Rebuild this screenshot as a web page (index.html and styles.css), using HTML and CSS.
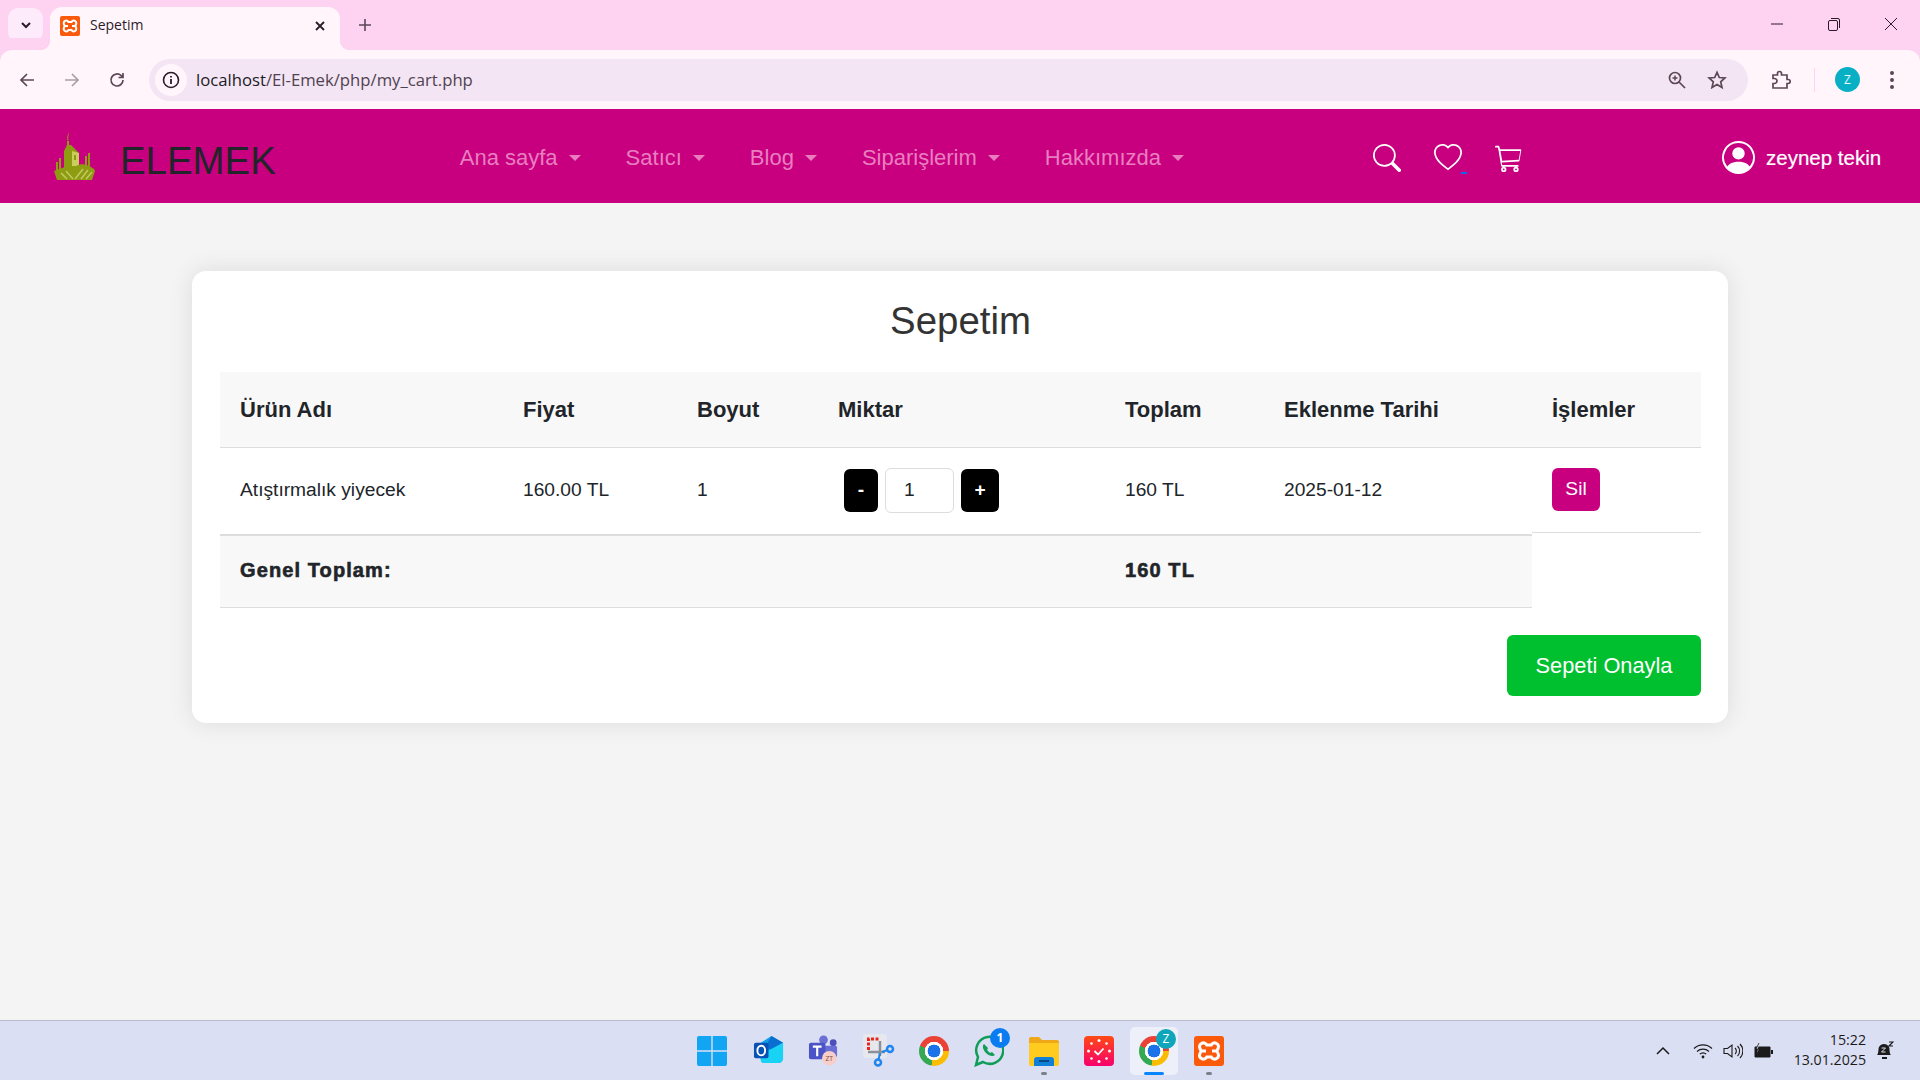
FILE: index.html
```html
<!DOCTYPE html>
<html lang="tr">
<head>
  <meta charset="UTF-8">
  <title>Sepetim</title>
  <link rel="stylesheet" href="styles.css">
</head>
<body>
  <!-- browser frame -->
  <div class="tabstrip">
    <div class="tab-search">
      <svg width="14" height="14" viewBox="0 0 14 14"><path d="M3 5l4 4 4-4" fill="none" stroke="#2b1b28" stroke-width="2"/></svg>
    </div>
    <div class="tab">
      <svg class="favicon" width="20" height="20" viewBox="0 0 20 20"><rect width="20" height="20" rx="2" fill="#fb5a0c"/><path d="M5 5c1.500-1 3 0 3.500 1h3c.5-1 2-2 3.500-1 2 1 1.500 3.500 0 5 1.500 1.500 2 4 0 5-1.500 1-3 0-3.500-1h-3c-.5 1-2 2-3.500 1-2-1-1.500-3.500 0-5-1.500-1.500-2-4 0-5zM5 10h3M12 10h3" fill="none" stroke="#fff" stroke-width="2"/></svg>
      <span class="tab-title">Sepetim</span>
      <svg width="12" height="12" viewBox="0 0 12 12"><path d="M2 2l8 8M10 2l-8 8" stroke="#2b1b28" stroke-width="1.8"/></svg>
    </div>
    <svg class="newtab" width="14" height="14" viewBox="0 0 14 14"><path d="M7 1v12M1 7h12" stroke="#5c4757" stroke-width="1.6"/></svg>
    <div class="win-btns">
      <svg width="14" height="14" viewBox="0 0 14 14"><path d="M1 7h12" stroke="#2b1b28" stroke-width="1"/></svg>
      <svg width="14" height="14" viewBox="0 0 14 14"><rect x="1.5" y="3.5" width="9" height="10" rx="1.5" fill="none" stroke="#2b1b28"/><path d="M4 1.5h7a1.5 1.5 0 0 1 1.5 1.5v8" fill="none" stroke="#2b1b28"/></svg>
      <svg width="14" height="14" viewBox="0 0 14 14"><path d="M1 1l12 12M13 1L1 13" stroke="#2b1b28" stroke-width="1"/></svg>
    </div>
  </div>

  <div class="toolbar">
    <svg class="tool" width="18" height="18" viewBox="0 0 18 18"><path d="M16 9H3M9 3L3 9l6 6" fill="none" stroke="#5c4757" stroke-width="1.7"/></svg>
    <svg class="tool" width="18" height="18" viewBox="0 0 18 18"><path d="M2 9h13M9 3l6 6-6 6" fill="none" stroke="#ab9ea8" stroke-width="1.7"/></svg>
    <svg class="tool" width="18" height="18" viewBox="0 0 18 18"><path d="M15 9a6 6 0 1 1-1.8-4.3L15 6.5M15 2v4.500h-4.500" fill="none" stroke="#5c4757" stroke-width="1.7"/></svg>
    <div class="omnibox">
      <span class="site-info">
        <svg width="18" height="18" viewBox="0 0 18 18"><circle cx="9" cy="9" r="7.5" fill="none" stroke="#2b1b28" stroke-width="1.6"/><path d="M9 8v5M9 5v1.6" stroke="#2b1b28" stroke-width="1.8"/></svg>
      </span>
      <span class="url">localhost<span class="url-path">/El-Emek/php/my_cart.php</span></span>
      <svg class="omni-zoom" width="20" height="20" viewBox="0 0 20 20"><circle cx="8" cy="8" r="5.5" fill="none" stroke="#5c4757" stroke-width="1.7"/><path d="M12 12l6 6" stroke="#5c4757" stroke-width="1.7"/><path d="M8 5.500v5M5.500 8h5" stroke="#5c4757" stroke-width="1.5"/></svg>
      <svg class="omni-star" width="20" height="20" viewBox="0 0 20 20"><path d="M10 2.300l2.300 5.200 5.600.5-4.200 3.800 1.300 5.600-5-3-5 3 1.300-5.600L2.100 8l5.600-.5z" fill="none" stroke="#5c4757" stroke-width="1.7"/></svg>
    </div>
    <svg class="ext-icon" width="20" height="20" viewBox="0 0 20 20"><path d="M2 5h4.500V3.500a2 2 0 0 1 4 0V5H16v4.500h1.200a2 2 0 0 1 0 4H16V18H2v-4.500h1.500a2.500 2.500 0 0 0 0-5H2z" fill="none" stroke="#5c4757" stroke-width="1.7"/></svg>
    <span class="tool-sep"></span>
    <span class="avatar">Z</span>
    <svg class="menu-dots" width="6" height="20" viewBox="0 0 6 20"><circle cx="3" cy="3" r="2" fill="#5c4757"/><circle cx="3" cy="10" r="2" fill="#5c4757"/><circle cx="3" cy="17" r="2" fill="#5c4757"/></svg>
  </div>

  <!-- site -->
  <nav class="navbar">
    <svg class="logo" width="43" height="48" viewBox="0 0 43 48">
      <path d="M15 0c1.500 3-.5 5 .5 8l-1 .5C13.500 5 15.500 3 15 0z" fill="#8d9c10"/>
      <path d="M14 9h2v4h2l8 8v17H11V19l3-6z" fill="#8d9c10"/>
      <path d="M19 19l7 2v13h-7z" fill="#c8cf5a"/>
      <path d="M21 23h2v5h-2z" fill="#8d9c10"/>
      <path d="M3 30h2v9H3zM6 26h2v12H6zM32 24h2v14h-2zM35 21h2v16h-2z" fill="#8d9c10"/>
      <path d="M1 39c5-2 10-4 14-5h8c6-3 11-2 18 3l1 2-3 9H4z" fill="#8d9c10"/>
      <path d="M22 47l8-10M28 47l7-9M33 47l6-7M8 41l6 6M13 39l7 8" stroke="#c2ca62" stroke-width="1.500"/>
    </svg>
    <a class="brand">ELEMEK</a>
    <ul class="nav-links">
      <li class="nav-link">Ana sayfa</li>
      <li class="nav-link">Satıcı</li>
      <li class="nav-link">Blog</li>
      <li class="nav-link">Siparişlerim</li>
      <li class="nav-link">Hakkımızda</li>
    </ul>
    <div class="nav-icons">
      <svg width="28" height="28" viewBox="0 0 16 16" fill="#fff"><path d="M11.742 10.344a6.500 6.500 0 1 0-1.397 1.398h-.001c.03.04.062.078.098.115l3.850 3.850a1 1 0 0 0 1.415-1.414l-3.850-3.850a1.007 1.007 0 0 0-.115-.1zM12 6.500a5.500 5.500 0 1 1-11 0 5.500 5.500 0 0 1 11 0z"/></svg>
      <span class="fav">
        <svg width="28" height="28" viewBox="0 0 16 16" fill="#fff"><path d="m8 2.748-.717-.737C5.600.281 2.514.878 1.400 3.053c-.523 1.023-.641 2.500.314 4.385.920 1.815 2.834 3.989 6.286 6.357 3.452-2.368 5.365-4.542 6.286-6.357.955-1.886.838-3.362.314-4.385C13.486.878 10.400.280 8.717 2.010L8 2.748zM8 15C-7.333 4.868 3.279-3.040 7.824 1.143c.06.055.119.112.176.171a3.120 3.120 0 0 1 .176-.17C12.720-3.042 23.333 4.867 8 15z"/></svg>
      </span>
      <svg width="28" height="28" viewBox="0 0 16 16" fill="#fff"><path d="M0 1.500A.5.500 0 0 1 .5 1H2a.5.500 0 0 1 .485.379L2.890 3H14.500a.5.500 0 0 1 .491.592l-1 6a.5.500 0 0 1-.447.406L3.800 10.500l.3 1.500H13a.5.500 0 0 1 0 1H4a.5.500 0 0 1-.491-.408L2.010 3.607 1.610 2H.5a.5.500 0 0 1-.5-.5zM3.102 4l1 5.500 9.480-.5.850-5H3.102zM5 13a1.500 1.500 0 1 0 0 3 1.500 1.500 0 0 0 0-3zm7 0a1.500 1.500 0 1 0 0 3 1.500 1.500 0 0 0 0-3zm-7 1a.5.500 0 1 1 0 1 .5.500 0 0 1 0-1zm7 0a.5.500 0 1 1 0 1 .5.500 0 0 1 0-1z"/></svg>
    </div>
    <div class="nav-user">
      <svg width="33" height="33" viewBox="0 0 16 16" fill="#fff"><path d="M11 6a3 3 0 1 1-6 0 3 3 0 0 1 6 0z"/><path fill-rule="evenodd" d="M0 8a8 8 0 1 1 16 0A8 8 0 0 1 0 8zm8-7a7 7 0 0 0-5.468 11.370C3.242 11.226 4.805 10 8 10s4.757 1.225 5.468 2.370A7 7 0 0 0 8 1z"/></svg>
      <span>zeynep tekin</span>
    </div>
  </nav>

  <main class="page">
    <section class="cart-card">
      <h2 class="cart-title">Sepetim</h2>
      <table class="cart-table">
        <colgroup>
          <col class="c-name"><col class="c-price"><col class="c-size"><col class="c-qty"><col class="c-total"><col class="c-date"><col class="c-act">
        </colgroup>
        <thead>
          <tr>
            <th>Ürün Adı</th>
            <th>Fiyat</th>
            <th>Boyut</th>
            <th>Miktar</th>
            <th>Toplam</th>
            <th>Eklenme Tarihi</th>
            <th>İşlemler</th>
          </tr>
        </thead>
        <tbody>
          <tr class="item-row">
            <td>Atıştırmalık yiyecek</td>
            <td>160.00 TL</td>
            <td>1</td>
            <td>
              <div class="qty">
                <button class="qty-btn minus">-</button>
                <input class="qty-input" type="text" value="1">
                <button class="qty-btn plus">+</button>
              </div>
            </td>
            <td>160 TL</td>
            <td>2025-01-12</td>
            <td class="act-cell"><div class="act-inner"><button class="btn-del">Sil</button></div></td>
          </tr>
          <tr class="sum-row">
            <td colspan="4">Genel Toplam:</td>
            <td>160 TL</td>
            <td></td>
          </tr>
        </tbody>
      </table>
      <div class="cart-actions">
        <button class="btn-confirm">Sepeti Onayla</button>
      </div>
    </section>
  </main>

  <!-- windows taskbar -->
  <footer class="taskbar">
    <div class="apps">
      <span class="app">
        <svg width="30" height="30" viewBox="0 0 30 30"><path d="M0 2a2 2 0 0 1 2-2h12.300v14.300H0zM15.700 0H28a2 2 0 0 1 2 2v12.300H15.700zM0 15.700h14.300V30H2a2 2 0 0 1-2-2zM15.700 15.700H30V28a2 2 0 0 1-2 2H15.700z" fill="#12a5f4"/></svg>
      </span>
      <span class="app">
        <svg width="31" height="31" viewBox="0 0 32 32"><path d="M8 8l11-7 12 7v16a5 5 0 0 1-5 5H12a4 4 0 0 1-4-4z" fill="#0f9fe8"/><path d="M19 1l12 7-12 8-6-4z" fill="#0a6fd0"/><path d="M8 20l23-12v16a5 5 0 0 1-5 5H12a4 4 0 0 1-4-4z" fill="#19d3f5"/><rect x="1" y="8" width="15" height="16" rx="2" fill="#0652b5"/><ellipse cx="8.500" cy="16" rx="4" ry="5" fill="none" stroke="#fff" stroke-width="2"/></svg>
      </span>
      <span class="app">
        <svg width="31" height="31" viewBox="0 0 32 32"><circle cx="16" cy="5" r="4.500" fill="#6a6fd6"/><circle cx="26" cy="8" r="3.500" fill="#4c50b8"/><rect x="16" y="11" width="14" height="12" rx="2" fill="#6a6fd6"/><rect x="1" y="8" width="17" height="17" rx="2" fill="#4b53c6"/><path d="M5 12h9M9.500 12v10" stroke="#fff" stroke-width="2.200"/><circle cx="22" cy="24" r="7.500" fill="#f5cfc8"/><text class="teams-zt" x="22" y="27">ZT</text></svg>
      </span>
      <span class="app">
        <svg width="32" height="33" viewBox="0 0 32 33"><rect width="24" height="24" rx="3" fill="#e6e8ee"/><path d="M5.500 16V5h11" fill="none" stroke="#e8261e" stroke-width="3" stroke-dasharray="3 1.500"/><path d="M17 7v15M5 18h17" stroke="#8c9098" stroke-width="2.500"/><circle cx="27" cy="15" r="3" fill="none" stroke="#1e86ee" stroke-width="2.500"/><circle cx="15" cy="28.500" r="3" fill="none" stroke="#1e86ee" stroke-width="2.500"/><path d="M17 19l-1.500 6.500M19 18l5.500-2" stroke="#1e86ee" stroke-width="2"/></svg>
      </span>
      <span class="app"><span class="chrome-logo"></span></span>
      <span class="app has-count">
        <svg width="30" height="32" viewBox="0 0 30 32"><path d="M2 30l2-8a13.500 13.500 0 1 1 5 5z" fill="none" stroke="#0f9d58" stroke-width="2.500"/><path d="M10 9c-2 2-1 6 2 9s7 4 9 2l-3-3-2 1-3-3 1-2z" fill="#0f9d58"/></svg>
        <span class="count">1</span>
      </span>
      <span class="app open">
        <svg width="30" height="30" viewBox="0 0 30 30"><path d="M0 3a2 2 0 0 1 2-2h8l3 3h15a2 2 0 0 1 2 2v3H0z" fill="#f0a818"/><path d="M0 7h30v21a2 2 0 0 1-2 2H2a2 2 0 0 1-2-2z" fill="#ffcb1f"/><path d="M5 30v-6a3 3 0 0 1 3-3h14a3 3 0 0 1 3 3v6z" fill="#0f7fd8"/><path d="M10 25h10" stroke="#063a70" stroke-width="1.600"/></svg>
      </span>
      <span class="app">
        <svg width="30" height="30" viewBox="0 0 30 30"><defs><linearGradient id="clk" x1="0" y1="0" x2="0" y2="1"><stop offset="0" stop-color="#ff4a14"/><stop offset="1" stop-color="#f8006c"/></linearGradient></defs><rect width="30" height="30" rx="4" fill="url(#clk)"/><g fill="#fff"><circle cx="15" cy="4.500" r="1.500"/><circle cx="15" cy="25.500" r="1.500"/><circle cx="4.500" cy="15" r="1.500"/><circle cx="25.500" cy="15" r="1.500"/><circle cx="7.500" cy="7.500" r="1.300"/><circle cx="22.500" cy="7.500" r="1.300"/><circle cx="7.500" cy="22.500" r="1.300"/><circle cx="22.500" cy="22.500" r="1.300"/></g><path d="M10.500 15l3.500 3.500 5.500-6" fill="none" stroke="#fff" stroke-width="1.800"/></svg>
      </span>
      <span class="app active">
        <span class="chrome-logo"></span>
        <span class="profile-badge">Z</span>
      </span>
      <span class="app open">
        <svg width="30" height="30" viewBox="0 0 20 20"><rect width="20" height="20" rx="2" fill="#fb5a0c"/><path d="M5 5c1.500-1 3 0 3.500 1h3c.5-1 2-2 3.500-1 2 1 1.500 3.500 0 5 1.500 1.500 2 4 0 5-1.500 1-3 0-3.500-1h-3c-.5 1-2 2-3.500 1-2-1-1.500-3.500 0-5-1.500-1.500-2-4 0-5zM5 10h3M12 10h3" fill="none" stroke="#fff" stroke-width="2"/></svg>
      </span>
    </div>
    <div class="tray">
      <svg width="14" height="14" viewBox="0 0 14 14"><path d="M1 10l6-6 6 6" fill="none" stroke="#1b1b1b" stroke-width="1.500"/></svg>
      <svg class="tray-wifi" width="20" height="16" viewBox="0 0 20 16"><path d="M1 5.500a13 13 0 0 1 18 0M4 8.500a9 9 0 0 1 12 0M6.800 11.200a4.500 4.500 0 0 1 6.400 0" fill="none" stroke="#1b1b1b" stroke-width="1.200"/><circle cx="10" cy="14" r="1.400" fill="#1b1b1b"/></svg>
      <svg class="tray-sound" width="20" height="16" viewBox="0 0 20 16"><path d="M1 5.500h3.500L9 2v12l-4.500-3.500H1z" fill="none" stroke="#1b1b1b" stroke-width="1.100"/><path d="M12 5a4 4 0 0 1 0 6M14.500 3a7 7 0 0 1 0 10M17 1a10 10 0 0 1 0 14" fill="none" stroke="#1b1b1b" stroke-width="1.100"/></svg>
      <svg class="tray-batt" width="20" height="16" viewBox="0 0 20 16"><path d="M2 4h15v10H2z" fill="#1b1b1b" stroke="#1b1b1b"/><rect x="18" y="7" width="2" height="4" fill="#1b1b1b"/><path d="M6 0L3 6h3l-2 5" fill="#dde0f4" stroke="#1b1b1b" stroke-width=".8"/></svg>
      <div class="clock">
        <span>15:22</span>
        <span>13.01.2025</span>
      </div>
      <svg class="tray-bell" width="18" height="20" viewBox="0 0 18 20"><path d="M1 14c2-2 1-6 2-8s3-3 5-3 4 1 5 3 0 6 2 8z" fill="#1b1b1b"/><path d="M6 17h5" stroke="#1b1b1b" stroke-width="2"/><path d="M5.500 7h4l-4 4h4" fill="none" stroke="#dde0f4" stroke-width="1"/><path d="M13 1h4l-4 4h4" fill="none" stroke="#1b1b1b" stroke-width="1.200"/></svg>
    </div>
  </footer>
</body>
</html>
```

FILE: styles.css
```css
* {
  box-sizing: border-box;
}
html, body {
  margin: 0;
  height: 100%;
}
body {
  display: flex;
  flex-direction: column;
  height: 1080px;
  overflow: hidden;
  font-family: "Liberation Sans", Arial, sans-serif;
  color: #212529;
  background: #f4f4f4;
}

/* browser frame */
.tabstrip {
  display: flex;
  align-items: flex-start;
  height: 50px;
  flex: none;
  background: #fdd3f1;
}
.tab-search {
  display: flex;
  align-items: center;
  justify-content: center;
  width: 35px;
  height: 34px;
  margin: 8px 7px 0 8px;
  border-radius: 10px;
  background: #fdeafa;
}
.tab {
  position: relative;
  display: flex;
  align-items: center;
  width: 290px;
  height: 43px;
  margin-top: 7px;
  padding: 0 14px 6px 10px;
  background: #fff5fb;
  border-radius: 12px 12px 0 0;
}
.tab::before,
.tab::after {
  content: "";
  position: absolute;
  bottom: 0;
  width: 10px;
  height: 10px;
}
.tab::before {
  left: -10px;
  background: radial-gradient(circle at 0 0, transparent 10px, #fff5fb 10.5px);
}
.tab::after {
  right: -10px;
  background: radial-gradient(circle at 100% 0, transparent 10px, #fff5fb 10.5px);
}
.favicon {
  flex: none;
}
.tab-title {
  flex: 1;
  margin: 0 0 2px 10px;
  font: 14px "Open Sans", sans-serif;
  color: #2b1b28;
}
.newtab {
  margin: 18px 0 0 18px;
}
.win-btns {
  display: flex;
  align-items: center;
  gap: 43px;
  margin: 17px 22px 0 auto;
}

.toolbar {
  display: flex;
  align-items: center;
  flex: none;
  height: 59px;
  padding: 0 0 0 18px;
  background: #fff5fb;
  border-radius: 12px 12px 0 0;
  box-shadow: 0 -12px 0 #fdd3f1;
}
.tool {
  margin-right: 27px;
}
.tool:nth-child(3) {
  margin-right: 23px;
}
.omnibox {
  display: flex;
  align-items: center;
  width: 1599px;
  height: 42px;
  padding: 0 21px 0 6px;
  border-radius: 21px;
  background: #f3e5f3;
}
.site-info {
  display: flex;
  align-items: center;
  justify-content: center;
  width: 32px;
  height: 32px;
  border-radius: 50%;
  background: #fff5fb;
}
.url {
  flex: 1;
  margin-left: 9px;
  font: 16.7px "Open Sans", sans-serif;
  color: #1c1b1f;
}
.url-path {
  color: #4f4250;
}
.omni-zoom {
  margin-right: 20px;
}
.ext-icon {
  margin-left: 23px;
}
.tool-sep {
  width: 1px;
  height: 24px;
  margin-left: 23px;
  background: #fdd3f1;
}
.avatar {
  display: flex;
  align-items: center;
  justify-content: center;
  width: 25px;
  height: 25px;
  margin-left: 20px;
  border-radius: 50%;
  background: #09afc5;
  color: #e8fbfd;
  font: 12px "Open Sans", sans-serif;
}
.menu-dots {
  margin-left: 29px;
}

/* navbar */
.navbar {
  display: flex;
  align-items: center;
  flex: none;
  height: 94px;
  padding-left: 53px;
  background: #c8007f;
}
.logo {
  flex: none;
}
.brand {
  margin: 9px 0 0 24px;
  font-size: 38.4px;
  color: #212529;
}
.nav-links {
  display: flex;
  gap: 45px;
  margin: 3px 0 0 184px;
  padding: 0;
  list-style: none;
}
.nav-link {
  font-size: 22px;
  color: #e87ec0;
  white-space: nowrap;
}
.nav-link::after {
  content: "";
  display: inline-block;
  margin-left: 11px;
  vertical-align: 4px;
  border-top: 6.5px solid #e87ec0;
  border-left: 6.5px solid transparent;
  border-right: 6.5px solid transparent;
}
.nav-icons {
  display: flex;
  gap: 33px;
  margin: 3px 0 0 189px;
}
.fav {
  position: relative;
  display: block;
  height: 28px;
}
.fav::after {
  content: "";
  position: absolute;
  left: 27px;
  top: 28px;
  width: 6px;
  height: 2px;
  background: #0a6cf5;
}
.nav-user {
  display: flex;
  align-items: center;
  gap: 11px;
  margin: 3px 0 0 199px;
  font-size: 20.5px;
  color: #fff;
  -webkit-text-stroke: .2px #fff;
}

/* cart */
.page {
  flex: 1;
  padding: 68px 192px 0;
}
.cart-card {
  height: 452px;
  padding: 27px 27px 0 28px;
  background: #fff;
  border-radius: 14px;
  box-shadow: 0 0 24px rgba(0, 0, 0, .1);
}
.cart-title {
  margin: 0 0 28px;
  font-size: 38.4px;
  font-weight: 400;
  line-height: 46px;
  text-align: center;
  color: #333;
}
.cart-table {
  width: 1481px;
  table-layout: fixed;
  border-collapse: separate;
  border-spacing: 0;
  font-size: 19.2px;
}
.c-name { width: 283px; }
.c-price { width: 174px; }
.c-size { width: 141px; }
.c-qty { width: 287px; }
.c-total { width: 159px; }
.c-date { width: 268px; }
.c-act { width: 169px; }

.cart-table th {
  height: 76px;
  padding: 0 20px;
  font-size: 22px;
  text-align: left;
  background: #f8f8f8;
  border-bottom: 1px solid #ddd;
}
.item-row td {
  height: 88px;
  padding: 0 20px 2px;
}
.item-row td:not(.act-cell) {
  border-bottom: 2px solid #ddd;
}
.item-row .act-cell {
  padding: 0;
  vertical-align: top;
}
.act-inner {
  height: 85px;
  padding: 20px 20px 0;
  border-bottom: 1px solid #ddd;
}
.sum-row td {
  height: 72px;
  padding: 0 20px 2px;
  font-size: 20px;
  font-weight: 700;
  letter-spacing: 1.1px;
  -webkit-text-stroke: .6px #212529;
  background: #f8f8f8;
  border-bottom: 1px solid #ddd;
}
.qty {
  display: flex;
  align-items: center;
  margin-left: 6px;
}
.qty-btn {
  height: 43px;
  padding: 0;
  border: 0;
  border-radius: 6px;
  background: #000;
  color: #fff;
  font: 700 19.2px "Liberation Sans", sans-serif;
}
.minus { width: 34px; }
.plus { width: 38px; }
.qty-input {
  width: 69px;
  height: 45px;
  margin: 0 7px;
  padding: 0 0 0 18px;
  border: 1px solid #ddd;
  border-radius: 6px;
  font: 19.2px "Liberation Sans", sans-serif;
  color: #212529;
}
.btn-del {
  display: block;
  width: 48px;
  height: 43px;
  padding: 0 0 2px;
  border: 0;
  border-radius: 6px;
  background: #c8007f;
  color: #fff;
  font: 19.2px "Liberation Sans", sans-serif;
}
.cart-actions {
  display: flex;
  justify-content: flex-end;
  width: 1481px;
  margin-top: 27px;
}
.btn-confirm {
  width: 194px;
  height: 61px;
  border: 0;
  border-radius: 6px;
  background: #00c02f;
  color: #fff;
  font: 21.8px "Liberation Sans", sans-serif;
}

/* taskbar */
.taskbar {
  display: flex;
  align-items: center;
  flex: none;
  height: 60px;
  padding-left: 684px;
  background: #dbdff3;
  border-top: 1px solid #b9bbcb;
}
.apps {
  display: flex;
  align-items: center;
  height: 100%;
}
.app {
  position: relative;
  display: flex;
  align-items: center;
  justify-content: center;
  width: 55px;
  height: 48px;
}
.app:first-child {
  margin-right: 2px;
}
.app.open::after,
.app.active::after {
  content: "";
  position: absolute;
  left: 50%;
  bottom: 0;
  width: 6px;
  height: 3px;
  margin-left: -3px;
  border-radius: 2px;
  background: #7d7f8c;
}
.app.active {
  background: #eef0f9;
  border-radius: 5px;
  width: 48px;
  margin: 0 3px 0 4px;
}
.app.active::after {
  width: 20px;
  margin-left: -10px;
  background: #0a84ff;
}
.chrome-logo {
  display: block;
  width: 30px;
  height: 30px;
  border-radius: 50%;
  background:
    radial-gradient(circle, #1a73e8 0 30%, #fff 31% 43%, transparent 44%),
    conic-gradient(from -70deg, #ea4335 0 160deg, #fbbc04 160deg 260deg, #34a853 260deg 360deg);
}
.count,
.profile-badge {
  position: absolute;
  display: flex;
  align-items: center;
  justify-content: center;
  border-radius: 50%;
  color: #fff;
  font: 12px "Open Sans", sans-serif;
}
.count {
  top: 1px;
  right: 6px;
  width: 20px;
  height: 20px;
  background: #0a7cf0;
  font-weight: 700;
}
.profile-badge {
  top: 2px;
  right: 2px;
  width: 20px;
  height: 20px;
  background: #0fa6bb;
}
.teams-zt {
  font: 7px "Open Sans", sans-serif;
  text-anchor: middle;
  fill: #8a4a40;
}
.tray {
  display: flex;
  align-items: center;
  margin-left: auto;
  padding-right: 26px;
}
.tray-wifi {
  margin-left: 23px;
}
.tray-sound {
  margin-left: 10px;
}
.tray-batt {
  margin-left: 10px;
}
.clock {
  display: flex;
  flex-direction: column;
  align-items: flex-end;
  margin: 0 0 2px 21px;
  font: 14.2px/20px "Open Sans", sans-serif;
  color: #1b1b1b;
}
.tray-bell {
  margin-left: 10px;
}
```
